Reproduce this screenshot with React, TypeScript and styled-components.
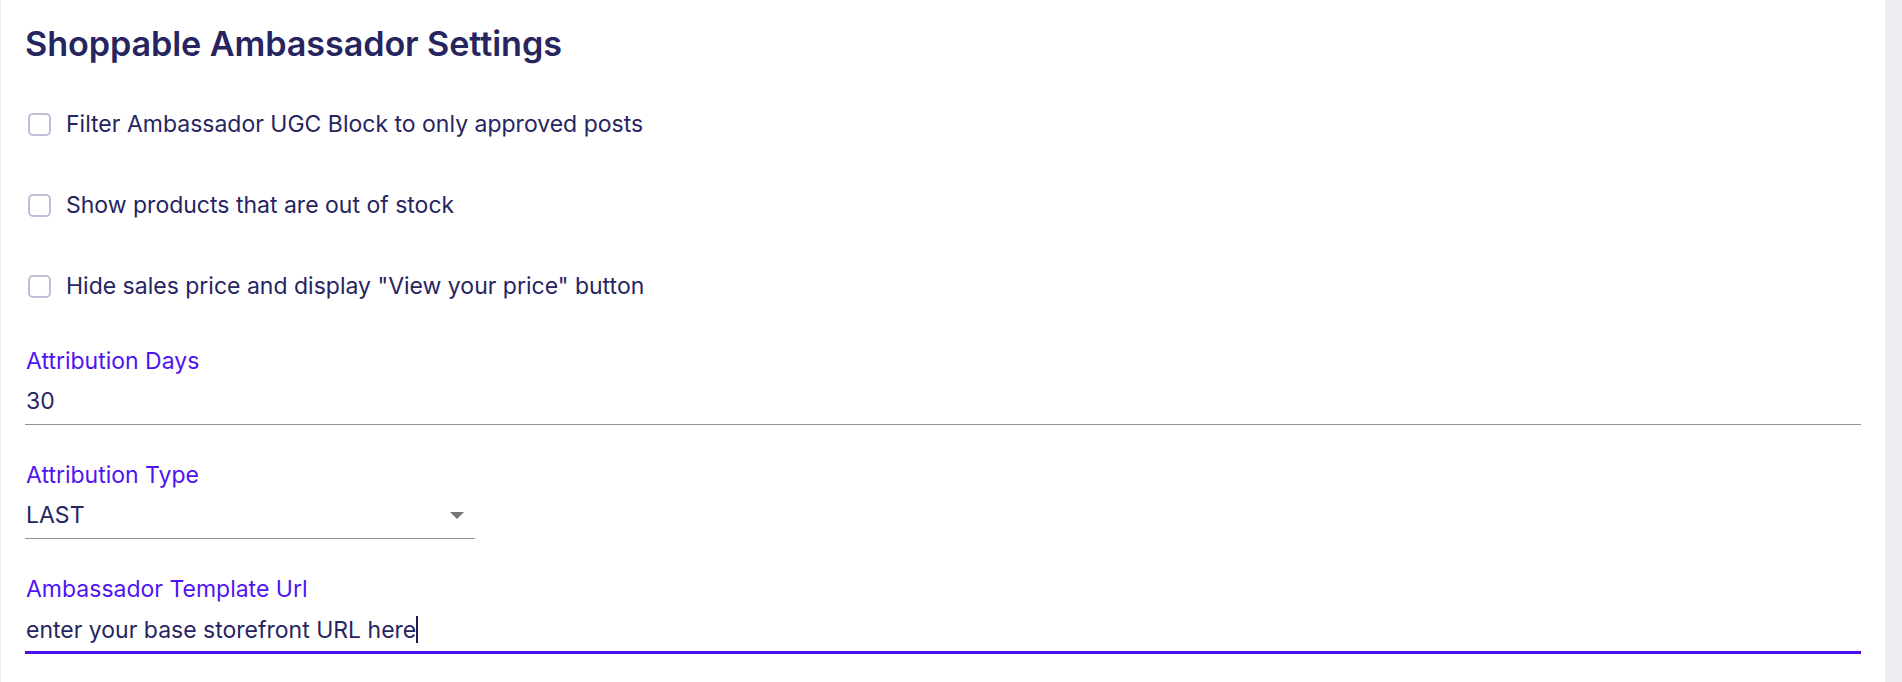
import React from "react";
import styled, { createGlobalStyle } from "styled-components";

const GlobalStyle = createGlobalStyle`
  html, body {
    margin: 0;
    padding: 0;
    background: #efedf4;
  }
  body {
    font-family: Inter, "Noto Sans", sans-serif;
    -webkit-font-smoothing: antialiased;
  }
`;

const Page = styled.div`
  display: flex;
  min-height: 682px;
  padding-left: 1px;
  padding-right: 17px;
  box-sizing: border-box;
`;

const Card = styled.section`
  flex: 1;
  background: #ffffff;
  padding: 24px 24px 24px 24px;
  display: flex;
  flex-direction: column;
`;

const Title = styled.h1`
  margin: 0;
  font-size: 34.2px;
  line-height: 40px;
  font-weight: 600;
  color: #27255f;
  letter-spacing: -0.1px;
`;

const CheckList = styled.div`
  display: flex;
  flex-direction: column;
  gap: 55px;
  margin-top: 47px;
  padding-left: 3px;
`;

const CheckRow = styled.label`
  display: flex;
  align-items: center;
  gap: 15px;
  font-size: 23px;
  line-height: 26px;
  color: #27255f;
`;

const Box = styled.span`
  width: 23px;
  height: 23px;
  box-sizing: border-box;
  border: 2px solid #c0bdd7;
  border-radius: 5px;
  flex: none;
`;

const Fields = styled.div`
  display: flex;
  flex-direction: column;
  gap: 37px;
  margin-top: 49px;
`;

const Field = styled.div<{ $width?: number }>`
  display: flex;
  flex-direction: column;
  width: ${(p) => (p.$width ? `${p.$width}px` : "100%")};
`;

const Label = styled.div`
  font-size: 23px;
  line-height: 26px;
  color: #4f14f2;
  margin-bottom: 14px;
  padding-left: 1px;
`;

const Value = styled.div<{ $focused?: boolean }>`
  display: flex;
  align-items: center;
  position: relative;
  font-size: 23px;
  line-height: 26px;
  color: #27255f;
  padding: 0 0 ${(p) => (p.$focused ? "8px" : "10px")} 1px;
  border-bottom: ${(p) => (p.$focused ? "3px solid #4b10ee" : "1px solid #949494")};
`;

const Arrow = styled.span`
  position: absolute;
  right: 11px;
  top: 10px;
  width: 0;
  height: 0;
  border-left: 7px solid transparent;
  border-right: 7px solid transparent;
  border-top: 7px solid #757575;
`;

const Caret = styled.span`
  display: inline-block;
  width: 2px;
  height: 27px;
  background: #1d1b4a;
`;

const checks = [
  "Filter Ambassador UGC Block to only approved posts",
  "Show products that are out of stock",
  'Hide sales price and display "View your price" button',
];

export default function App() {
  return (
    <>
      <GlobalStyle />
      <Page>
        <Card>
          <Title>Shoppable Ambassador Settings</Title>
          <CheckList>
            {checks.map((c) => (
              <CheckRow key={c}>
                <Box />
                <span>{c}</span>
              </CheckRow>
            ))}
          </CheckList>
          <Fields>
            <Field>
              <Label>Attribution Days</Label>
              <Value>30</Value>
            </Field>
            <Field $width={450}>
              <Label>Attribution Type</Label>
              <Value>
                LAST
                <Arrow />
              </Value>
            </Field>
            <Field>
              <Label>Ambassador Template Url</Label>
              <Value $focused>
                enter your base storefront URL here
                <Caret />
              </Value>
            </Field>
          </Fields>
        </Card>
      </Page>
    </>
  );
}
